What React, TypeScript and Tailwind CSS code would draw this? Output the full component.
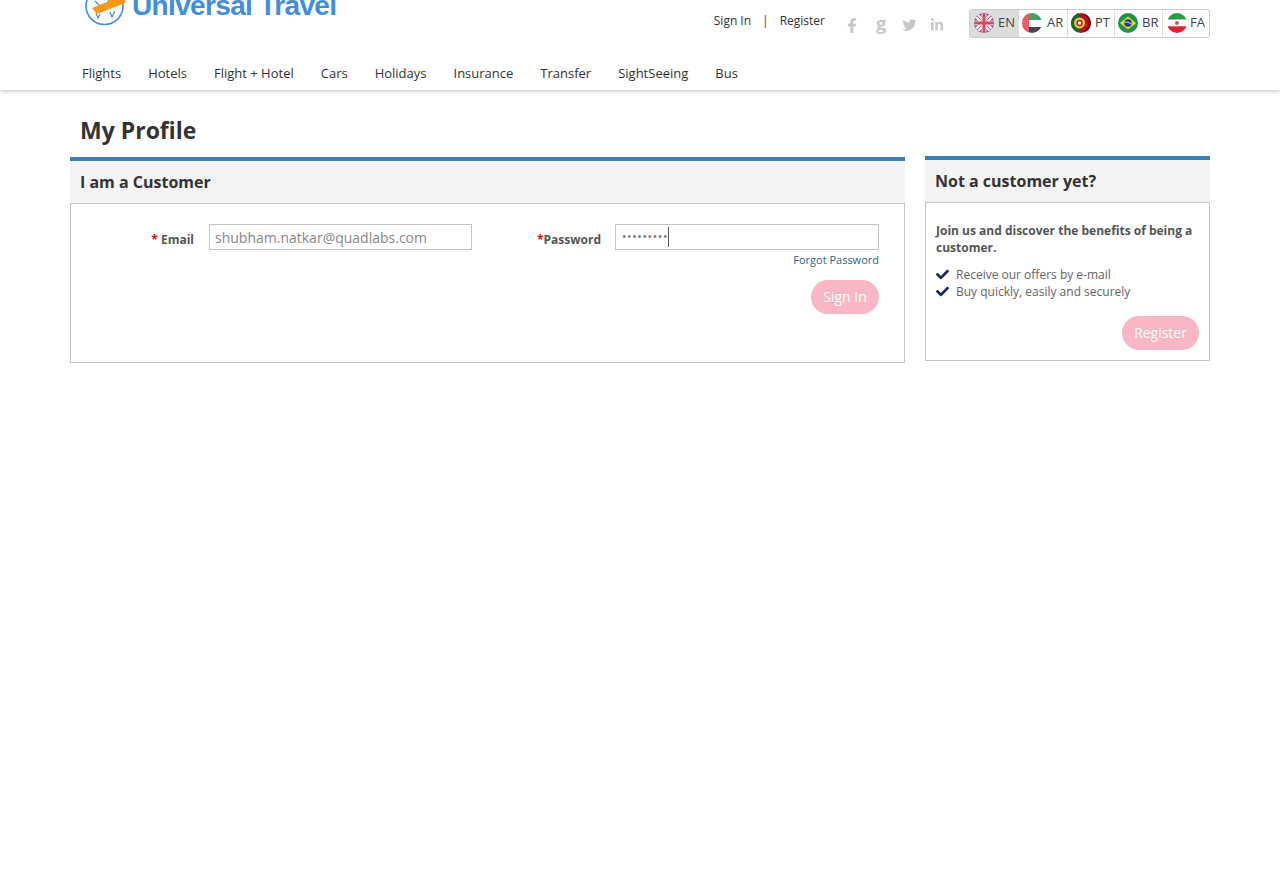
import { FaCheck, FaFacebookF, FaLinkedinIn, FaTwitter } from 'react-icons/fa'

const navItems = ['Flights', 'Hotels', 'Flight + Hotel', 'Cars', 'Holidays', 'Insurance', 'Transfer', 'SightSeeing', 'Bus']

const FlagCircle = ({ id, children }: { id: string; children: React.ReactNode }) => (
  <svg width="20" height="20" viewBox="0 0 20 20" className="shrink-0">
    <clipPath id={id}>
      <circle cx="10" cy="10" r="10" />
    </clipPath>
    <g clipPath={`url(#${id})`}>{children}</g>
  </svg>
)

const flags = [
  {
    code: 'EN',
    cell: 'w-[48px] gap-[4px] pl-[4px] bg-[#dcdcdc]',
    icon: (
      <FlagCircle id="en">
        <rect width="20" height="20" fill="#4a5a9c" />
        <path d="M0 2 18 20M20 2 2 20M2 0 20 18M18 0 0 18" stroke="#f3e9ec" strokeWidth="2.5" />
        <path d="M0 0 20 20M20 0 0 20" stroke="#d9475f" strokeWidth="1" />
        <path d="M10 0V20M0 10H20" stroke="#f3e9ec" strokeWidth="5" />
        <path d="M10 0V20M0 10H20" stroke="#d9475f" strokeWidth="3" />
      </FlagCircle>
    ),
  },
  {
    code: 'AR',
    cell: 'w-[49px] gap-[5px] pl-[3px] border-l border-[#ddd]',
    icon: (
      <FlagCircle id="ar">
        <rect width="20" height="7" fill="#3fa45f" />
        <rect y="7" width="20" height="7" fill="#ffffff" />
        <rect y="14" width="20" height="6" fill="#41474f" />
        <rect width="7" height="20" fill="#f1596a" />
      </FlagCircle>
    ),
  },
  {
    code: 'PT',
    cell: 'w-[47px] gap-[4px] pl-[3px] border-l border-[#ddd]',
    icon: (
      <FlagCircle id="pt">
        <rect width="20" height="20" fill="#b3121d" />
        <rect width="8" height="20" fill="#0f6a2c" />
        <circle cx="8.5" cy="10" r="5.5" fill="#e9c63a" />
        <circle cx="8.5" cy="10" r="3.2" fill="#c8202c" />
        <circle cx="8.5" cy="10" r="1.7" fill="#ffffff" />
        <path d="M14 1 A10 10 0 0 1 14 19" fill="none" stroke="#200" strokeWidth="3" opacity="0.7" />
      </FlagCircle>
    ),
  },
  {
    code: 'BR',
    cell: 'w-[48px] gap-[4px] pl-[3px] border-l border-[#ddd]',
    icon: (
      <FlagCircle id="br">
        <rect width="20" height="20" fill="#1f9345" />
        <path d="M10 3.5 18 10 10 16.5 2 10Z" fill="#f2d52a" />
        <circle cx="10" cy="10" r="3.8" fill="#1e3f86" />
        <path d="M6.3 9.2C8.5 8.8 11.5 9.4 13.7 11" fill="none" stroke="#fff" strokeWidth="0.8" />
      </FlagCircle>
    ),
  },
  {
    code: 'FA',
    cell: 'w-[47px] gap-[3px] pl-[4px] border-l border-[#ddd]',
    icon: (
      <FlagCircle id="fa">
        <rect width="20" height="6.7" fill="#2a9d4a" />
        <rect y="6.7" width="20" height="6.6" fill="#ffffff" />
        <rect y="13.3" width="20" height="6.7" fill="#e0202c" />
        <circle cx="10" cy="10" r="2" fill="#d8505c" />
      </FlagCircle>
    ),
  },
]

const PinkButton = ({ label, width }: { label: string; width: string }) => (
  <button className={`${width} h-[34px] rounded-full bg-[#f9b6c4] pb-px text-[14px] text-white`}>{label}</button>
)

const Logo = () => (
  <div className="flex h-[26px] items-end overflow-hidden pl-[15px]">
    <svg width="42" height="40" viewBox="0 0 42 40" className="shrink-0 -mb-px">
      <circle cx="19.5" cy="19" r="18.5" fill="none" stroke="#3f8fdc" strokeWidth="1.6" />
      <path d="M11 26 13 31 15 27M25 25 27 30 30 24M10 14 15 19M16 10 20 13" fill="none" stroke="#3f8fdc" strokeWidth="1.2" />
      <path d="M7 21 22 15 24 9 32 9 30 13 41 11 40 16 12 27Z" fill="#f7981d" />
    </svg>
    <span className="ml-[5px] mb-[6px] font-['Liberation_Sans',sans-serif] text-[28px] leading-[28px] font-bold tracking-[-0.65px] whitespace-nowrap text-[#3f8fdc]">
      Universal Travel
    </span>
  </div>
)

const Header = () => (
  <header className="h-[90px] bg-white shadow-[0_1px_4px_rgba(0,0,0,0.25)]">
    <div className="mx-auto w-[1140px]">
      <div className="flex h-[58px] justify-between">
        <Logo />
        <div className="flex items-start">
          <div className="mt-[12px] flex text-[12px] leading-[17px] text-[#333]">
            <a>Sign In</a>
            <span className="mx-[11px] text-[#444]">|</span>
            <a>Register</a>
          </div>
          <div className="mt-[17px] ml-[20px] flex h-[16px] items-center text-[#c8c8c8]">
            <FaFacebookF className="ml-[1px] h-[15px] w-[12px]" />
            <span className="ml-[18px] w-[14px] text-[18px] leading-[16px] font-bold -mt-[4px]">g</span>
            <FaTwitter className="ml-[12px] h-[14px] w-[15px]" />
            <FaLinkedinIn className="ml-[13px] h-[14px] w-[14px]" />
          </div>
          <div className="mt-[9px] ml-[25px] flex h-[29px] overflow-hidden rounded-[3px] border border-[#ccc]">
            {flags.map((flag) => (
              <div key={flag.code} className={`${flag.cell} flex items-center pb-px text-[13px] text-[#444]`}>
                {flag.icon}
                <span>{flag.code}</span>
              </div>
            ))}
          </div>
        </div>
      </div>
      <nav className="flex gap-[27px] pt-[5px] pl-[12px] text-[13px] leading-[20px] text-[#333]">
        {navItems.map((item) => (
          <a key={item}>{item}</a>
        ))}
      </nav>
    </div>
  </header>
)

const CustomerPanel = () => (
  <section className="mt-[1px] w-[835px]">
    <div className="h-[46px] border-t-4 border-[#357ebd] bg-[#f4f4f4] pl-[10px] text-[16px] leading-[42px] font-bold text-[#333]">
      I am a Customer
    </div>
    <div className="flex h-[160px] justify-between border border-[#c4c4c4] pt-[20px] pr-[25px]">
      <div className="flex w-[401px] items-start text-[12px]">
        <label className="mt-[7px] w-[123px] text-right leading-[18px] font-bold text-[#555]">
          <span className="text-[#e00]">*</span> Email
        </label>
        <input
          className="ml-[15px] h-[26px] w-[263px] border border-[#c4c4c4] px-[5px] text-[14px] text-[#888] outline-none"
          defaultValue="shubham.natkar@quadlabs.com"
        />
      </div>
      <div className="flex flex-col items-end">
        <div className="flex items-start text-[12px]">
          <label className="mt-[7px] leading-[18px] font-bold text-[#555]">
            <span className="text-[#e00]">*</span>Password
          </label>
          <div className="ml-[14px] flex h-[26px] w-[264px] items-center border border-[#c4c4c4] pl-[6px]">
            <span className="text-[12px] leading-none tracking-[0.6px] text-[#777]">•••••••••</span>
            <span className="h-[20px] w-px bg-[#555]" />
          </div>
        </div>
        <a className="mt-[2px] text-[11px] leading-[16px] text-[#2a6496]">Forgot Password</a>
        <div className="mt-[12px]">
          <PinkButton label="Sign In" width="w-[68px]" />
        </div>
      </div>
    </div>
  </section>
)

const RegisterPanel = () => (
  <section className="w-[285px]">
    <div className="h-[46px] border-t-4 border-[#357ebd] bg-[#f4f4f4] pl-[10px] text-[16px] leading-[42px] font-bold text-[#333]">
      Not a customer yet?
    </div>
    <div className="h-[159px] border border-[#c4c4c4] px-[10px] pt-[19px]">
      <p className="text-[12px] leading-[17px] font-bold text-[#555]">Join us and discover the benefits of being a customer.</p>
      <ul className="mt-[10px] text-[12px] leading-[17px] text-[#666]">
        {['Receive our offers by e-mail', 'Buy quickly, easily and securely'].map((text) => (
          <li key={text} className="flex items-center gap-[7px]">
            <FaCheck className="h-[13px] w-[13px] text-[#1b2a5e]" />
            {text}
          </li>
        ))}
      </ul>
      <div className="mt-[16px] flex justify-end">
        <PinkButton label="Register" width="w-[77px]" />
      </div>
    </div>
  </section>
)

const App = () => (
  <div className="min-h-[878px] bg-white font-['Open_Sans',sans-serif]">
    <Header />
    <main className="mx-auto w-[1140px]">
      <h1 className="h-[66px] pt-[24px] pl-[10px] text-[23px] leading-[33px] font-bold text-[#333]">My Profile</h1>
      <div className="flex items-start justify-between">
        <CustomerPanel />
        <RegisterPanel />
      </div>
    </main>
  </div>
)

export default App
